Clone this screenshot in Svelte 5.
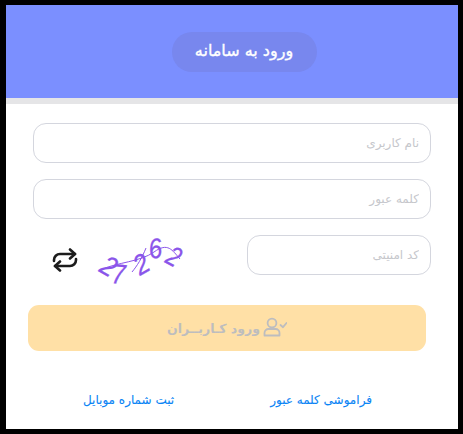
<script>
    let username = '';
    let password = '';
    let captcha = '';
    // digits of the captcha picture, each with its own skew
    const digits = [
        { ch: '2', x: 98, y: 271, r: 30, sx: 0.9 },
        { ch: '7', x: 111, y: 283, r: 6, sx: 0.85 },
        { ch: '2', x: 140, y: 276, r: -30, sx: 0.9 },
        { ch: '6', x: 150, y: 259, r: -8, sx: 0.85 },
        { ch: '2', x: 164, y: 262, r: 28, sx: 0.8 }
    ];
</script>

<div class="frame">
    <header class="head">
        <div class="title">ورود به سامانه</div>
    </header>

    <form class="login" on:submit|preventDefault>
        <div class="field">
            <input bind:value={username} placeholder="نام کاربری" />
        </div>
        <div class="field">
            <input type="password" bind:value={password} placeholder="کلمه عبور" />
        </div>

        <div class="captcha-row">
            <input class="captcha-input" bind:value={captcha} placeholder="کد امنیتی" />
            <svg class="captcha" viewBox="95 220 95 70" width="95" height="70" aria-label="captcha">
                {#each digits as d}
                    <text
                        class="digit"
                        transform="translate({d.x} {d.y}) rotate({d.r}) scale({d.sx} 1)">{d.ch}</text>
                {/each}
                <path class="noise" d="M100 270 C118 262 140 262 154 252 S172 250 180 259" />
                <path class="noise" d="M132 272 C137 266 142 258 146 248" />
            </svg>
            <button class="reload" type="button" aria-label="refresh">
                <svg viewBox="0 0 26 24" width="26" height="24">
                    <path d="M18 1.5 L23 6 L18 10.5" />
                    <path d="M23 6 H8 A6 6 0 0 0 2 12 V13" />
                    <path d="M8 22.5 L3 18 L8 13.5" />
                    <path d="M3 18 H18 A6 6 0 0 0 24 12 V11" />
                </svg>
            </button>
        </div>

        <button class="submit" type="submit" disabled>
            <span>ورود کـاربــران</span>
            <svg viewBox="0 0 24 20" width="24" height="20">
                <circle cx="9" cy="6" r="4.4" />
                <path d="M1.5 18.5 V16 A4 4 0 0 1 5.5 12 H12.5 A4 4 0 0 1 16.5 16 V18.5 Z" />
                <path d="M17.5 8 L20 10.2 L23.5 6" />
            </svg>
        </button>

        <div class="links">
            <a href="#forgot">فراموشی کلمه عبور</a>
            <a href="#mobile">ثبت شماره موبایل</a>
        </div>
    </form>
</div>

<style>
    :global(body){
        margin: 0;
        background: #fff;
    }

    .frame{
        box-sizing: border-box;
        width: 463px;
        height: 434px;
        border-style: solid;
        border-color: #000;
        border-width: 5px 5px 5px 6px;
        background: #fff;
        font-family: 'DejaVu Sans', 'Noto Sans', sans-serif;
        direction: rtl;
    }

    .head{
        height: 93px;
        background: #7b8fff;
        border-bottom: 6px solid #e5e5e7;
        display: flex;
        justify-content: center;
        align-items: center;
    }

    .title{
        width: 145px;
        height: 40px;
        margin-left: 24px;
        border-radius: 20px;
        background: #7887ee;
        color: #fff;
        font-size: 16px;
        font-weight: 500;
        line-height: 37px;
        text-align: center;
        -webkit-text-stroke: 0.35px #fff;
    }

    .login{
        display: flex;
        flex-direction: column;
        padding: 19px 27px 0 27px;
    }

    .field{
        margin-bottom: 16px;
    }

    input{
        box-sizing: border-box;
        width: 100%;
        height: 40px;
        padding: 0 11px;
        border: 1px solid #d4d6de;
        border-radius: 13px;
        background: #fff;
        font-family: inherit;
        font-size: 12px;
        direction: rtl;
        outline: none;
    }

    input::placeholder{
        color: #c6c7cc;
    }

    .captcha-row{
        display: flex;
        align-items: center;
        height: 40px;
    }

    .captcha-input{
        width: 184px;
        flex: none;
    }

    .captcha{
        margin-right: 57px;
        flex: none;
        direction: ltr;
        overflow: visible;
    }

    .digit{
        fill: #8a55ea;
        stroke: #8a55ea;
        stroke-width: 0.3;
        font-family: 'Liberation Sans', sans-serif;
        font-size: 28px;
        font-style: italic;
    }

    .noise{
        fill: none;
        stroke: #8a55ea;
        stroke-width: 1;
    }

    .reload{
        margin-right: 17px;
        margin-top: 10px;
        padding: 0;
        border: none;
        background: none;
        display: flex;
        cursor: pointer;
    }

    .reload path{
        fill: none;
        stroke: #1c1c1c;
        stroke-width: 2.6;
        stroke-linecap: round;
        stroke-linejoin: round;
    }

    .submit{
        margin: 30px 5px 0 -5px;
        height: 46px;
        border: none;
        border-radius: 11px;
        background: #ffe0a6;
        color: #bdbdbf;
        font-family: inherit;
        font-size: 12.5px;
        font-weight: 700;
        display: flex;
        justify-content: center;
        align-items: center;
        gap: 3px;
        flex-direction: row-reverse;
    }

    .submit svg{
        fill: none;
        stroke: #bdbdbf;
        stroke-width: 1.8;
        stroke-linecap: round;
        stroke-linejoin: round;
        margin-bottom: 2px;
    }

    .links{
        display: flex;
        justify-content: space-between;
        margin-top: 42px;
        padding: 0 59px 0 50px;
    }

    a{
        color: #0a84f5;
        font-size: 12px;
        text-decoration: none;
        -webkit-text-stroke: 0.1px #0a84f5;
    }
</style>
